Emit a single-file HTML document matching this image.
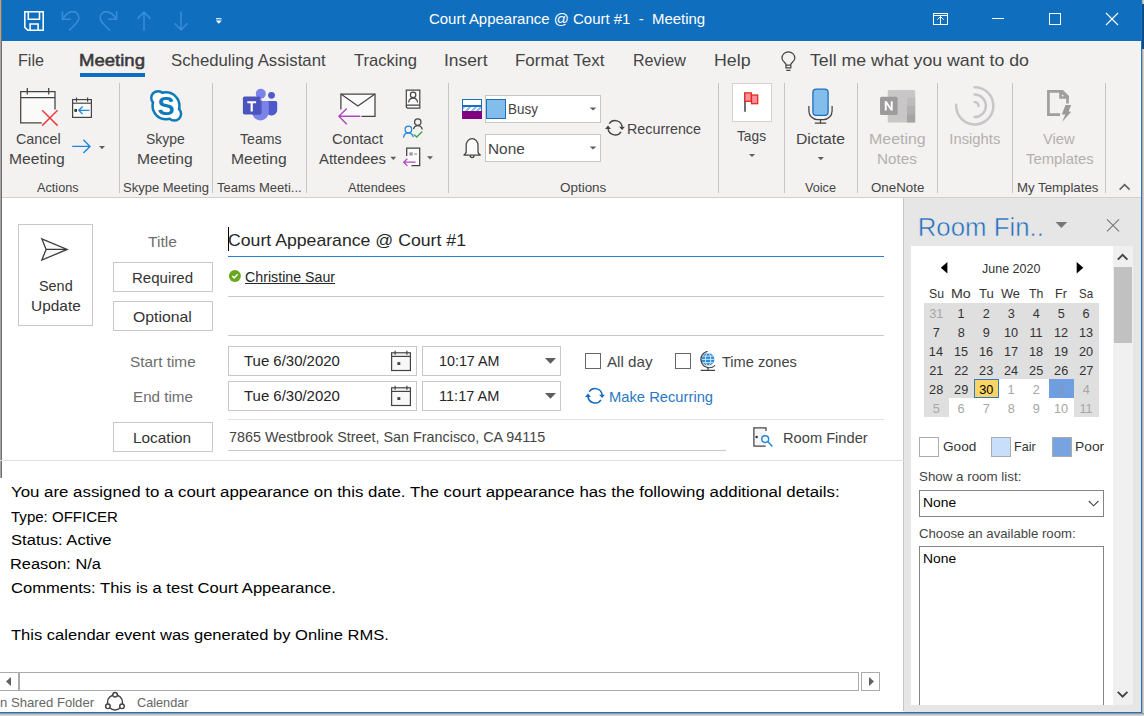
<!DOCTYPE html>
<html><head><meta charset="utf-8"><title>Court Appearance @ Court #1 - Meeting</title>
<style>
html,body{margin:0;padding:0;}
body{width:1144px;height:716px;overflow:hidden;position:relative;background:#fff;
font-family:"Liberation Sans", sans-serif;}
#w{position:absolute;left:0;top:0;width:1144px;height:716px;overflow:hidden;}
#w div,#w svg,#w span{position:absolute;}
.t{white-space:pre;transform-origin:0 50%;}
</style></head><body><div id="w">
<div style="left:0px;top:0px;width:1144px;height:41px;background:#106ebe;"></div>
<div style="left:0px;top:41px;width:1144px;height:156px;background:#f3f2f1;"></div>
<div style="left:0px;top:197px;width:1144px;height:1px;background:#d2d0ce;"></div>
<div style="left:904px;top:198px;width:238px;height:515px;background:#e6e6e6;"></div>
<div style="left:903px;top:198px;width:1px;height:513px;background:#c4c4c4;"></div>
<div style="left:0px;top:0px;width:1px;height:478px;background:#a6a6a6;"></div>
<div style="left:1px;top:0px;width:1px;height:478px;background:#6e6e6e;"></div>
<div style="left:1141px;top:0px;width:1px;height:713px;background:#1e74c4;"></div>
<div style="left:1142px;top:0px;width:1px;height:716px;background:#b4b0ac;"></div>
<div style="left:1143px;top:0px;width:1px;height:716px;background:#d2cfcc;"></div>
<div style="left:1142px;top:4px;width:2px;height:45px;background:#0f4c85;"></div>
<div style="left:1140px;top:41px;width:1px;height:156px;background:#fbf8f4;"></div>
<div style="left:0px;top:712px;width:1142px;height:1px;background:#1e74c4;"></div>
<div style="left:0px;top:713px;width:1144px;height:1px;background:#9a9a9a;"></div>
<div style="left:0px;top:714px;width:1144px;height:1px;background:#bdbdbd;"></div>
<div style="left:0px;top:715px;width:1144px;height:1px;background:#d8d8d8;"></div>
<span class="t" style="left:429.30px;top:10.87px;font-size:15.3px;line-height:15.3px;color:#fff;transform:scaleX(0.9775);">Court Appearance @ Court #1 &nbsp;- &nbsp;Meeting</span>
<svg style="left:23px;top:10px;" width="22" height="22" viewBox="0 0 22 22"><g fill="none" stroke="#fff" stroke-width="1.550">
<path d="M1.800 1.800H20.200V20.200H4.800L1.800 17.300z"/><path d="M5.300 1.800v7.400h11.200V1.800"/><path d="M7.100 20.200v-6.300h8v6.300"/></g></svg>
<svg style="left:61px;top:10px;" width="20" height="22" viewBox="0 0 20 22"><g fill="none" stroke="#3a8cd8" stroke-width="1.550">
<path d="M1.400 1.200v8.100h8.400"/><path d="M2 8.800C5 3.500 8.500 1.600 12 1.600A6 6.200 0 0 1 17.900 7.800C17.900 10.500 16 12.500 14.500 14L8 20.800"/></g></svg>
<svg style="left:98px;top:10px;" width="20" height="22" viewBox="0 0 20 22"><g fill="none" stroke="#3a8cd8" stroke-width="1.550" transform="translate(20,0) scale(-1,1)">
<path d="M1.400 1.200v8.100h8.400"/><path d="M2 8.800C5 3.500 8.500 1.600 12 1.600A6 6.200 0 0 1 17.900 7.800C17.900 10.500 16 12.500 14.500 14L8 20.800"/></g></svg>
<svg style="left:136px;top:10px;" width="16" height="22" viewBox="0 0 16 22"><g fill="none" stroke="#3a8cd8" stroke-width="1.550"><path d="M8 20.5V2.2M1.6 8.6L8 2.2l6.4 6.4"/></g></svg>
<svg style="left:173px;top:10px;" width="16" height="22" viewBox="0 0 16 22"><g fill="none" stroke="#3a8cd8" stroke-width="1.550"><path d="M8 1.5v18.3M1.6 13.4L8 19.8l6.4-6.4"/></g></svg>
<svg style="left:215px;top:17px;" width="8" height="8" viewBox="0 0 8 8"><path d="M1 1.2h5.6v1.1H1z" fill="#fff"/><path d="M0.8 3.6h6l-3 3.2z" fill="#fff"/></svg>
<svg style="left:932px;top:12px;" width="17" height="14" viewBox="0 0 17 14"><g fill="none" stroke="#fff" stroke-width="1"><rect x="1.500" y="1.500" width="14" height="11"/><path d="M1.500 3.500h14"/><path d="M8.500 12.500V4M5.400 7.700l3.100-3.200 3.100 3.200"/></g></svg>
<div style="left:992px;top:18px;width:12px;height:1px;background:#fff;"></div>
<div style="left:1049px;top:13px;width:12px;height:12px;border:1px solid #fff;box-sizing:border-box;"></div>
<svg style="left:1105px;top:12px;" width="14" height="14" viewBox="0 0 14 14"><path d="M1 1l12 12M13 1L1 13" stroke="#fff" stroke-width="1.1" fill="none"/></svg>
<span class="t" style="left:18.24px;top:52.02px;font-size:17px;line-height:17px;color:#444444;transform:scaleX(0.9497);">File</span>
<span class="t" style="left:79.05px;top:52.02px;font-size:17px;line-height:17px;color:#3b3a39;transform:scaleX(1.0911);-webkit-text-stroke:0.550px #3b3a39;">Meeting</span>
<div style="left:80px;top:73px;width:65px;height:4px;background:#106ebe;"></div>
<span class="t" style="left:170.78px;top:52.02px;font-size:17px;line-height:17px;color:#444444;transform:scaleX(0.9858);">Scheduling Assistant</span>
<span class="t" style="left:354.34px;top:52.02px;font-size:17px;line-height:17px;color:#444444;transform:scaleX(0.9758);">Tracking</span>
<span class="t" style="left:443.94px;top:52.02px;font-size:17px;line-height:17px;color:#444444;transform:scaleX(1.0231);">Insert</span>
<span class="t" style="left:514.97px;top:52.02px;font-size:17px;line-height:17px;color:#444444;">Format Text</span>
<span class="t" style="left:633.04px;top:52.02px;font-size:17px;line-height:17px;color:#444444;transform:scaleX(0.9466);">Review</span>
<span class="t" style="left:713.81px;top:52.02px;font-size:17px;line-height:17px;color:#444444;transform:scaleX(1.0441);">Help</span>
<span class="t" style="left:809.82px;top:52.02px;font-size:17px;line-height:17px;color:#444444;transform:scaleX(1.0435);">Tell me what you want to do</span>
<svg style="left:780px;top:50px;" width="17" height="22" viewBox="0 0 17 22"><g fill="none" stroke="#444" stroke-width="1.250">
<path d="M6 17.800V14.700C6 12.500 2 11.700 2 8.200A6.400 6.400 0 0 1 14.800 8.200C14.800 11.700 10.800 12.500 10.800 14.700V17.800z"/>
<path d="M6 15h4.800M6.300 20.400h4.200"/></g></svg>
<div style="left:119px;top:83px;width:1px;height:110px;background:#c8c6c4;"></div>
<div style="left:212px;top:83px;width:1px;height:110px;background:#c8c6c4;"></div>
<div style="left:306px;top:83px;width:1px;height:110px;background:#c8c6c4;"></div>
<div style="left:448px;top:83px;width:1px;height:110px;background:#c8c6c4;"></div>
<div style="left:718px;top:83px;width:1px;height:110px;background:#c8c6c4;"></div>
<div style="left:784px;top:83px;width:1px;height:110px;background:#c8c6c4;"></div>
<div style="left:857px;top:83px;width:1px;height:110px;background:#c8c6c4;"></div>
<div style="left:937px;top:83px;width:1px;height:110px;background:#c8c6c4;"></div>
<div style="left:1012px;top:83px;width:1px;height:110px;background:#c8c6c4;"></div>
<div style="left:1105px;top:83px;width:1px;height:110px;background:#c8c6c4;"></div>
<span class="t" style="left:15.63px;top:131.62px;font-size:14.8px;line-height:14.8px;color:#444444;transform:scaleX(0.9685);">Cancel</span>
<span class="t" style="left:9.37px;top:151.62px;font-size:14.8px;line-height:14.8px;color:#444444;transform:scaleX(1.0599);">Meeting</span>
<span class="t" style="left:37.40px;top:180.82px;font-size:13.4px;line-height:13.4px;color:#444444;transform:scaleX(0.9466);">Actions</span>
<span class="t" style="left:146.16px;top:131.62px;font-size:14.8px;line-height:14.8px;color:#444444;transform:scaleX(0.9433);">Skype</span>
<span class="t" style="left:137.38px;top:151.62px;font-size:14.8px;line-height:14.8px;color:#444444;transform:scaleX(1.0579);">Meeting</span>
<span class="t" style="left:122.99px;top:180.82px;font-size:13.4px;line-height:13.4px;color:#444444;transform:scaleX(0.9707);">Skype Meeting</span>
<span class="t" style="left:239.68px;top:131.62px;font-size:14.8px;line-height:14.8px;color:#444444;transform:scaleX(0.9534);">Teams</span>
<span class="t" style="left:231.38px;top:151.62px;font-size:14.8px;line-height:14.8px;color:#444444;transform:scaleX(1.0559);">Meeting</span>
<span class="t" style="left:216.90px;top:180.82px;font-size:13.4px;line-height:13.4px;color:#444444;transform:scaleX(0.9719);">Teams Meeti...</span>
<span class="t" style="left:331.70px;top:131.62px;font-size:14.8px;line-height:14.8px;color:#444444;transform:scaleX(1.0027);">Contact</span>
<span class="t" style="left:319.40px;top:151.62px;font-size:14.8px;line-height:14.8px;color:#444444;transform:scaleX(1.0032);">Attendees</span>
<span class="t" style="left:348.20px;top:180.82px;font-size:13.4px;line-height:13.4px;color:#444444;transform:scaleX(0.9528);">Attendees</span>
<div style="left:462px;top:99px;width:20px;height:20px;background:#fff;border:1px solid #1a6fbf;box-sizing:border-box;"></div>
<div style="left:462px;top:105px;width:20px;height:2px;background:#1a6fbf;"></div>
<div style="left:463px;top:107px;width:18px;height:4px;background:#a8d0f0;background:repeating-linear-gradient(135deg,#8fc3ee 0 2px,#fff 2px 4px);"></div>
<div style="left:462px;top:111px;width:20px;height:8px;background:#800080;"></div>
<div style="left:485px;top:95px;width:116px;height:27.5px;background:#fff;border:1px solid #c6c6c6;box-sizing:border-box;"></div>
<div style="left:486px;top:99px;width:20px;height:20px;background:#83bdeb;border:1.3px solid #1a6fbf;box-sizing:border-box;"></div>
<span class="t" style="left:507.95px;top:101.62px;font-size:14.8px;line-height:14.8px;color:#444444;transform:scaleX(0.9072);">Busy</span>
<div style="left:485px;top:134px;width:116px;height:27.5px;background:#fff;border:1px solid #c6c6c6;box-sizing:border-box;"></div>
<span class="t" style="left:487.50px;top:141.62px;font-size:14.8px;line-height:14.8px;color:#444444;transform:scaleX(1.0379);">None</span>
<span class="t" style="left:627.18px;top:121.62px;font-size:14.8px;line-height:14.8px;color:#444444;transform:scaleX(0.9673);">Recurrence</span>
<span class="t" style="left:559.67px;top:180.82px;font-size:13.4px;line-height:13.4px;color:#444444;transform:scaleX(1.0037);">Options</span>
<div style="left:732px;top:83px;width:40px;height:39px;background:#fff;border:1px solid #d4d2d0;box-sizing:border-box;"></div>
<span class="t" style="left:737.29px;top:128.62px;font-size:14.8px;line-height:14.8px;color:#444444;transform:scaleX(0.9291);">Tags</span>
<span class="t" style="left:796.47px;top:131.62px;font-size:14.8px;line-height:14.8px;color:#444444;transform:scaleX(1.0631);">Dictate</span>
<span class="t" style="left:805.00px;top:180.82px;font-size:13.4px;line-height:13.4px;color:#444444;transform:scaleX(0.9461);">Voice</span>
<span class="t" style="left:868.95px;top:131.62px;font-size:14.8px;line-height:14.8px;color:#b3b0ad;transform:scaleX(1.0777);">Meeting</span>
<span class="t" style="left:877.41px;top:151.62px;font-size:14.8px;line-height:14.8px;color:#b3b0ad;transform:scaleX(1.0312);">Notes</span>
<span class="t" style="left:870.98px;top:180.82px;font-size:13.4px;line-height:13.4px;color:#444444;transform:scaleX(0.9950);">OneNote</span>
<span class="t" style="left:949.35px;top:131.62px;font-size:14.8px;line-height:14.8px;color:#b3b0ad;">Insights</span>
<span class="t" style="left:1043.00px;top:131.62px;font-size:14.8px;line-height:14.8px;color:#b3b0ad;transform:scaleX(0.9940);">View</span>
<span class="t" style="left:1025.67px;top:151.62px;font-size:14.8px;line-height:14.8px;color:#b3b0ad;transform:scaleX(1.0051);">Templates</span>
<span class="t" style="left:1017.37px;top:180.82px;font-size:13.4px;line-height:13.4px;color:#444444;transform:scaleX(0.9878);">My Templates</span>
<div style="left:18px;top:224px;width:75px;height:102px;background:#fff;border:1px solid #c8c8c8;box-sizing:border-box;"></div>
<span class="t" style="left:38.75px;top:278.62px;font-size:14.8px;line-height:14.8px;color:#333;transform:scaleX(0.9738);">Send</span>
<span class="t" style="left:30.53px;top:298.62px;font-size:14.8px;line-height:14.8px;color:#333;transform:scaleX(1.0433);">Update</span>
<span class="t" style="left:148.46px;top:234.62px;font-size:14.8px;line-height:14.8px;color:#6e6e6e;transform:scaleX(1.0572);">Title</span>
<span class="t" style="left:228.37px;top:232.02px;font-size:17px;line-height:17px;color:#262626;transform:scaleX(1.0394);">Court Appearance @ Court #1</span>
<div style="left:228px;top:226.5px;width:1px;height:24.5px;background:#000;"></div>
<div style="left:228px;top:256px;width:656px;height:1px;background:#2b7fd0;"></div>
<div style="left:113px;top:262px;width:100px;height:30px;background:#fff;border:1px solid #c8c8c8;box-sizing:border-box;"></div>
<span class="t" style="left:132.22px;top:270.62px;font-size:14.8px;line-height:14.8px;color:#333;transform:scaleX(1.0177);">Required</span>
<span class="t" style="left:244.83px;top:269.72px;font-size:14.6px;line-height:14.6px;color:#262626;transform:scaleX(0.9744);">Christine Saur</span>
<div style="left:245px;top:283px;width:90px;height:1px;background:#262626;"></div>
<div style="left:228px;top:296px;width:656px;height:1px;background:#c8c8c8;"></div>
<div style="left:113px;top:301px;width:100px;height:30px;background:#fff;border:1px solid #c8c8c8;box-sizing:border-box;"></div>
<span class="t" style="left:133.46px;top:309.62px;font-size:14.8px;line-height:14.8px;color:#333;transform:scaleX(1.0663);">Optional</span>
<div style="left:228px;top:335px;width:656px;height:1px;background:#c8c8c8;"></div>
<span class="t" style="left:129.82px;top:354.62px;font-size:14.8px;line-height:14.8px;color:#6e6e6e;transform:scaleX(1.0375);">Start time</span>
<span class="t" style="left:132.51px;top:389.62px;font-size:14.8px;line-height:14.8px;color:#6e6e6e;transform:scaleX(1.0274);">End time</span>
<div style="left:228px;top:346px;width:189px;height:30px;background:#fff;border:1px solid #c8c8c8;box-sizing:border-box;"></div>
<div style="left:422px;top:346px;width:139px;height:30px;background:#fff;border:1px solid #c8c8c8;box-sizing:border-box;"></div>
<span class="t" style="left:244.47px;top:353.62px;font-size:14.8px;line-height:14.8px;color:#262626;transform:scaleX(1.0105);">Tue 6/30/2020</span>
<span class="t" style="left:438.91px;top:353.62px;font-size:14.8px;line-height:14.8px;color:#262626;transform:scaleX(0.9670);">10:17 AM</span>
<div style="left:228px;top:381px;width:189px;height:30px;background:#fff;border:1px solid #c8c8c8;box-sizing:border-box;"></div>
<div style="left:422px;top:381px;width:139px;height:30px;background:#fff;border:1px solid #c8c8c8;box-sizing:border-box;"></div>
<span class="t" style="left:244.47px;top:388.62px;font-size:14.8px;line-height:14.8px;color:#262626;transform:scaleX(1.0105);">Tue 6/30/2020</span>
<span class="t" style="left:438.89px;top:388.62px;font-size:14.8px;line-height:14.8px;color:#262626;transform:scaleX(0.9846);">11:17 AM</span>
<div style="left:585px;top:353px;width:16px;height:16px;background:#fff;border:1px solid #666;box-sizing:border-box;"></div>
<span class="t" style="left:607.30px;top:354.62px;font-size:14.8px;line-height:14.8px;color:#444;transform:scaleX(1.0243);">All day</span>
<div style="left:675px;top:353px;width:16px;height:16px;background:#fff;border:1px solid #666;box-sizing:border-box;"></div>
<span class="t" style="left:722.37px;top:354.62px;font-size:14.8px;line-height:14.8px;color:#444;transform:scaleX(0.9860);">Time zones</span>
<span class="t" style="left:609.35px;top:389.62px;font-size:14.8px;line-height:14.8px;color:#2b79c2;transform:scaleX(0.9964);">Make Recurring</span>
<div style="left:228px;top:419px;width:656px;height:1px;background:#e3e3e3;"></div>
<div style="left:113px;top:422px;width:100px;height:30px;background:#fff;border:1px solid #c8c8c8;box-sizing:border-box;"></div>
<span class="t" style="left:133.30px;top:430.62px;font-size:14.8px;line-height:14.8px;color:#333;transform:scaleX(1.0395);">Location</span>
<span class="t" style="left:228.93px;top:429.62px;font-size:14.8px;line-height:14.8px;color:#444;transform:scaleX(0.9700);">7865 Westbrook Street, San Francisco, CA 94115</span>
<div style="left:228px;top:450px;width:498px;height:1px;background:#c8c8c8;"></div>
<span class="t" style="left:782.95px;top:430.62px;font-size:14.8px;line-height:14.8px;color:#444;transform:scaleX(0.9904);">Room Finder</span>
<div style="left:0px;top:460px;width:904px;height:1px;background:#e1dfdd;"></div>
<span class="t" style="left:11.44px;top:484.32px;font-size:15.2px;line-height:15.2px;color:#000;transform:scaleX(1.1090);">You are assigned to a court appearance on this date. The court appearance has the following additional details:</span>
<span class="t" style="left:11.46px;top:508.52px;font-size:15.2px;line-height:15.2px;color:#000;transform:scaleX(0.9903);">Type: OFFICER</span>
<span class="t" style="left:11.18px;top:531.92px;font-size:15.2px;line-height:15.2px;color:#000;transform:scaleX(1.0921);">Status: Active</span>
<span class="t" style="left:10.42px;top:555.52px;font-size:15.2px;line-height:15.2px;color:#000;transform:scaleX(1.0767);">Reason: N/a</span>
<span class="t" style="left:10.92px;top:579.52px;font-size:15.2px;line-height:15.2px;color:#000;transform:scaleX(1.0910);">Comments: This is a test Court Appearance.</span>
<span class="t" style="left:11.44px;top:626.72px;font-size:15.2px;line-height:15.2px;color:#000;transform:scaleX(1.0890);">This calendar event was generated by Online RMS.</span>
<div style="left:-1px;top:672px;width:860px;height:19px;background:#fff;border:1px solid #ababab;box-sizing:border-box;"></div>
<div style="left:18px;top:672px;width:2px;height:19px;background:#ababab;"></div>
<div style="left:861px;top:672px;width:19px;height:19px;background:#fff;border:1px solid #ababab;box-sizing:border-box;"></div>
<span class="t" style="left:-0.32px;top:695.87px;font-size:13.3px;line-height:13.3px;color:#666666;transform:scaleX(0.9865);">n Shared Folder</span>
<span class="t" style="left:137.20px;top:695.87px;font-size:13.3px;line-height:13.3px;color:#666666;transform:scaleX(0.9553);">Calendar</span>
<span class="t" style="left:917.69px;top:215.12px;font-size:25.8px;line-height:25.8px;color:#1e6ec0;-webkit-text-stroke:0.500px #e6e6e6;">Room Fin..</span>
<div style="left:911px;top:246px;width:202px;height:459px;background:#fff;"></div>
<div style="left:1113px;top:246px;width:20px;height:459px;background:#f0f0f0;"></div>
<div style="left:1113.5px;top:267px;width:18.5px;height:75.5px;background:#c1c1c1;"></div>
<span class="t" style="left:982.05px;top:262.67px;font-size:12.7px;line-height:12.7px;color:#333;transform:scaleX(0.9845);">June 2020</span>
<div style="left:924px;top:303px;width:175px;height:114px;background:#dfdfdf;"></div>
<div style="left:999px;top:379px;width:50px;height:19px;background:#fff;"></div>
<div style="left:949px;top:398px;width:125px;height:19px;background:#fff;"></div>
<div style="left:1049px;top:379px;width:25px;height:19px;background:#6f9fe0;"></div>
<div style="left:974px;top:379px;width:25px;height:19px;background:#fcd464;border:1px solid #2b79c2;box-sizing:border-box;"></div>
<span class="t" style="left:928.67px;top:287.67px;font-size:12.7px;line-height:12.7px;color:#333;transform:scaleX(0.9668);">Su</span>
<span class="t" style="left:950.80px;top:287.67px;font-size:12.7px;line-height:12.7px;color:#333;transform:scaleX(1.1200);">Mo</span>
<span class="t" style="left:978.94px;top:287.67px;font-size:12.7px;line-height:12.7px;color:#333;transform:scaleX(1.0311);">Tu</span>
<span class="t" style="left:1000.95px;top:287.67px;font-size:12.7px;line-height:12.7px;color:#333;transform:scaleX(1.0106);">We</span>
<span class="t" style="left:1028.96px;top:287.67px;font-size:12.7px;line-height:12.7px;color:#333;transform:scaleX(0.9667);">Th</span>
<span class="t" style="left:1054.51px;top:287.67px;font-size:12.7px;line-height:12.7px;color:#333;transform:scaleX(0.9900);">Fr</span>
<span class="t" style="left:1078.70px;top:287.67px;font-size:12.7px;line-height:12.7px;color:#333;transform:scaleX(0.9054);">Sa</span>
<span class="t" style="left:929.22px;top:307.67px;font-size:12.7px;line-height:12.7px;color:#a6a6a6;">31</span>
<span class="t" style="left:957.50px;top:307.67px;font-size:12.7px;line-height:12.7px;color:#333;">1</span>
<span class="t" style="left:982.68px;top:307.67px;font-size:12.7px;line-height:12.7px;color:#333;">2</span>
<span class="t" style="left:1007.70px;top:307.67px;font-size:12.7px;line-height:12.7px;color:#333;">3</span>
<span class="t" style="left:1032.73px;top:307.67px;font-size:12.7px;line-height:12.7px;color:#333;">4</span>
<span class="t" style="left:1057.67px;top:307.67px;font-size:12.7px;line-height:12.7px;color:#333;">5</span>
<span class="t" style="left:1082.62px;top:307.67px;font-size:12.7px;line-height:12.7px;color:#333;">6</span>
<span class="t" style="left:932.65px;top:326.67px;font-size:12.7px;line-height:12.7px;color:#333;">7</span>
<span class="t" style="left:957.65px;top:326.67px;font-size:12.7px;line-height:12.7px;color:#333;">8</span>
<span class="t" style="left:982.68px;top:326.67px;font-size:12.7px;line-height:12.7px;color:#333;">9</span>
<span class="t" style="left:1003.89px;top:326.67px;font-size:12.7px;line-height:12.7px;color:#333;">10</span>
<span class="t" style="left:1029.44px;top:326.67px;font-size:12.7px;line-height:12.7px;color:#333;">11</span>
<span class="t" style="left:1053.97px;top:326.67px;font-size:12.7px;line-height:12.7px;color:#333;">12</span>
<span class="t" style="left:1078.92px;top:326.67px;font-size:12.7px;line-height:12.7px;color:#333;">13</span>
<span class="t" style="left:928.84px;top:345.67px;font-size:12.7px;line-height:12.7px;color:#333;">14</span>
<span class="t" style="left:953.92px;top:345.67px;font-size:12.7px;line-height:12.7px;color:#333;">15</span>
<span class="t" style="left:978.92px;top:345.67px;font-size:12.7px;line-height:12.7px;color:#333;">16</span>
<span class="t" style="left:1003.97px;top:345.67px;font-size:12.7px;line-height:12.7px;color:#333;">17</span>
<span class="t" style="left:1028.92px;top:345.67px;font-size:12.7px;line-height:12.7px;color:#333;">18</span>
<span class="t" style="left:1053.94px;top:345.67px;font-size:12.7px;line-height:12.7px;color:#333;">19</span>
<span class="t" style="left:1079.07px;top:345.67px;font-size:12.7px;line-height:12.7px;color:#333;">20</span>
<span class="t" style="left:929.14px;top:364.67px;font-size:12.7px;line-height:12.7px;color:#333;">21</span>
<span class="t" style="left:954.14px;top:364.67px;font-size:12.7px;line-height:12.7px;color:#333;">22</span>
<span class="t" style="left:979.09px;top:364.67px;font-size:12.7px;line-height:12.7px;color:#333;">23</span>
<span class="t" style="left:1004.02px;top:364.67px;font-size:12.7px;line-height:12.7px;color:#333;">24</span>
<span class="t" style="left:1029.09px;top:364.67px;font-size:12.7px;line-height:12.7px;color:#333;">25</span>
<span class="t" style="left:1054.09px;top:364.67px;font-size:12.7px;line-height:12.7px;color:#333;">26</span>
<span class="t" style="left:1079.14px;top:364.67px;font-size:12.7px;line-height:12.7px;color:#333;">27</span>
<span class="t" style="left:929.09px;top:383.67px;font-size:12.7px;line-height:12.7px;color:#333;">28</span>
<span class="t" style="left:954.12px;top:383.67px;font-size:12.7px;line-height:12.7px;color:#333;">29</span>
<span class="t" style="left:979.14px;top:383.67px;font-size:12.7px;line-height:12.7px;color:#000;">30</span>
<span class="t" style="left:1007.50px;top:383.67px;font-size:12.7px;line-height:12.7px;color:#a6a6a6;">1</span>
<span class="t" style="left:1032.67px;top:383.67px;font-size:12.7px;line-height:12.7px;color:#a6a6a6;">2</span>
<span class="t" style="left:1057.70px;top:383.67px;font-size:12.7px;line-height:12.7px;color:#8098bd;">3</span>
<span class="t" style="left:1082.73px;top:383.67px;font-size:12.7px;line-height:12.7px;color:#a6a6a6;">4</span>
<span class="t" style="left:932.68px;top:402.67px;font-size:12.7px;line-height:12.7px;color:#a6a6a6;">5</span>
<span class="t" style="left:957.62px;top:402.67px;font-size:12.7px;line-height:12.7px;color:#a6a6a6;">6</span>
<span class="t" style="left:982.65px;top:402.67px;font-size:12.7px;line-height:12.7px;color:#a6a6a6;">7</span>
<span class="t" style="left:1007.65px;top:402.67px;font-size:12.7px;line-height:12.7px;color:#a6a6a6;">8</span>
<span class="t" style="left:1032.67px;top:402.67px;font-size:12.7px;line-height:12.7px;color:#a6a6a6;">9</span>
<span class="t" style="left:1053.89px;top:402.67px;font-size:12.7px;line-height:12.7px;color:#a6a6a6;">10</span>
<span class="t" style="left:1079.44px;top:402.67px;font-size:12.7px;line-height:12.7px;color:#a6a6a6;">11</span>
<div style="left:919px;top:437px;width:20px;height:20px;background:#fff;border:1px solid #ababab;box-sizing:border-box;"></div>
<span class="t" style="left:943.26px;top:440.67px;font-size:12.7px;line-height:12.7px;color:#333;transform:scaleX(1.0723);">Good</span>
<div style="left:991px;top:437px;width:20px;height:20px;background:#c7dffb;border:1px solid #ababab;box-sizing:border-box;"></div>
<span class="t" style="left:1014.21px;top:440.67px;font-size:12.7px;line-height:12.7px;color:#333;transform:scaleX(0.9907);">Fair</span>
<div style="left:1052px;top:437px;width:20px;height:20px;background:#77a4e1;border:1px solid #ababab;box-sizing:border-box;"></div>
<span class="t" style="left:1074.91px;top:440.67px;font-size:12.7px;line-height:12.7px;color:#333;transform:scaleX(1.0878);">Poor</span>
<span class="t" style="left:918.72px;top:470.67px;font-size:12.7px;line-height:12.7px;color:#444;transform:scaleX(1.0520);">Show a room list:</span>
<div style="left:919px;top:490px;width:185px;height:27px;background:#fff;border:1px solid #848488;box-sizing:border-box;"></div>
<span class="t" style="left:923.31px;top:496.67px;font-size:12.7px;line-height:12.7px;color:#000;transform:scaleX(1.0904);">None</span>
<span class="t" style="left:918.98px;top:527.67px;font-size:12.7px;line-height:12.7px;color:#444;transform:scaleX(1.0378);">Choose an available room:</span>
<div style="left:919px;top:546px;width:185px;height:170px;background:#fff;border:1px solid #848488;box-sizing:border-box;clip-path:inset(0 0 11px 0);"></div>
<span class="t" style="left:923.31px;top:552.67px;font-size:12.7px;line-height:12.7px;color:#000;transform:scaleX(1.0904);">None</span>
<svg style="left:0px;top:0px;pointer-events:none;" width="1144" height="716" viewBox="0 0 1144 716"><g fill="none" stroke="#444" stroke-width="1.25">
<rect x="20.700" y="91.600" width="34.300" height="31.300" fill="#fafafa" stroke="none"/><path d="M55 109.500V91.600H20.700V122.900H41.800"/><path d="M20.700 97.700H55"/>
<path d="M27.300 88v6.600M48.700 88v6.600"/></g>
<path d="M42.200 110.200L57.600 125.600M57.600 110.200L42.200 125.600" stroke="#ee3d43" stroke-width="1.5" fill="none"/><g fill="none" stroke="#444" stroke-width="1.2">
<rect x="72.600" y="99.600" width="18.800" height="17.800" fill="#fafafa"/><path d="M72.600 103.200H91.400"/>
<path d="M76.500 97.600v4.200M87.600 97.600v4.200"/></g>
<rect x="74.400" y="109" width="2.600" height="2.800" fill="#333"/>
<path d="M89.400 110.300H79M82.600 106.500L78.800 110.300l3.800 3.800" stroke="#1e86dd" stroke-width="1.3" fill="none"/><path d="M72.200 146.400H90M83.400 139.800L90 146.400l-6.600 6.600" stroke="#1e86dd" stroke-width="1.4" fill="none"/><path d="M99 146H105L102.0 149.3z" fill="#605e5c"/><g fill="#0f7ab8"><circle cx="166" cy="105.800" r="14.700"/><circle cx="158" cy="97.900" r="8"/><circle cx="174.300" cy="113.800" r="8"/></g>
<g fill="#fff"><circle cx="166" cy="105.800" r="12.200"/><circle cx="158" cy="97.900" r="5.500"/><circle cx="174.300" cy="113.800" r="5.500"/></g>
<text x="166.100" y="114.700" text-anchor="middle" font-family="Liberation Sans, sans-serif" font-weight="700" font-size="25.500" fill="#0f7ab8">S</text><circle cx="271.500" cy="95.300" r="3.400" fill="#5059c9"/>
<path d="M266 101h9.600a1.600 1.600 0 0 1 1.600 1.600v7.400a5.400 5.400 0 0 1-5.400 5.400h-0.600a5.400 5.400 0 0 1-5.200-5.400z" fill="#5059c9"/>
<circle cx="260.800" cy="93.800" r="5" fill="#7b83eb"/>
<path d="M252 101h15.200a1.600 1.600 0 0 1 1.600 1.600v9.400a8.400 8.400 0 0 1-16.800 0z" fill="#7b83eb"/>
<path d="M253 99.500h8.800v13.600a1.600 1.600 0 0 1-1.600 1.600h-7.200z" fill="#3d44a8" opacity=".55"/>
<rect x="242.900" y="96.600" width="17.600" height="17.800" rx="1.600" fill="#4b53bc"/>
<path d="M247.300 101.200h8.800v2h-3.300v8.400h-2.200v-8.400h-3.300z" fill="#fff"/><g fill="none" stroke="#444" stroke-width="1.25">
<rect x="340.900" y="94.100" width="34.100" height="22.300" fill="#fafafa" stroke="none"/><path d="M340.900 109.600V94.100H375v22.300H361.500"/><path d="M340.900 94.100L357.900 105.900 375 94.100"/></g>
<path d="M360.300 116.300H339M346.800 108.400L338.900 116.300l7.900 7.900" stroke="#b146c2" stroke-width="1.4" fill="none"/><path d="M390.4 156.8H396.2L393.29999999999995 159.9z" fill="#605e5c"/><g fill="none" stroke="#444" stroke-width="1.200">
<path d="M406.300 90.100h13.500v18h-12.200a1.500 1.500 0 0 1-1.300-1.500z" fill="#fafafa"/><path d="M406.300 106.400c0-0.800 0.600-1.300 1.400-1.300h12"/>
<circle cx="413.100" cy="94.900" r="2.700"/><path d="M408.600 102.400c0.300-2.600 2.200-4.300 4.500-4.300s4.200 1.700 4.500 4.300"/></g><g fill="none" stroke-width="1.250">
<circle cx="417.800" cy="122.100" r="3.200" stroke="#444"/><path d="M413.500 129.200c0.600-2.400 2.200-3.700 4.300-3.700 2.200 0 4 1.500 4.500 4" stroke="#444"/>
<circle cx="408.400" cy="129.500" r="3.300" stroke="#1e86dd"/><path d="M403.500 137.800c0.300-3 2.300-4.900 4.900-4.900 2.400 0 4.300 1.700 4.900 4.300" stroke="#1e86dd"/>
<path d="M414 134.600l2.700 2.500 5.600-5.500" stroke="#3ba845" stroke-width="1.400"/></g><g fill="none" stroke="#444" stroke-width="1.250">
<rect x="406.700" y="148" width="13" height="17.600" fill="#fafafa" stroke="none"/><path d="M406.700 156V148h13v17.600h-8.200"/></g>
<rect x="409.400" y="152.400" width="3.300" height="3.100" fill="#9a9a9a"/><rect x="414.200" y="153.400" width="2.800" height="1.200" fill="#9a9a9a"/>
<path d="M415.600 162.200H404M407.400 158.600L403.700 162.200l3.700 3.700" stroke="#b146c2" stroke-width="1.300" fill="none"/><path d="M427 156.2H433L430.0 159.4z" fill="#605e5c"/><path d="M589.7 107.6H596.3L593.0 110.6z" fill="#605e5c"/><path d="M589.7 146.6H596.3L593.0 149.6z" fill="#605e5c"/><g fill="none" stroke="#444" stroke-width="1.250"><path d="M463.600 155.200c1.600-0.600 2.600-1.400 2.600-3.600v-6.200c0-3.800 2.600-6.700 5.900-6.700s5.900 2.900 5.900 6.700v6.200c0 2.200 1 3 2.600 3.600z" fill="#fafafa"/>
<path d="M470.100 155.600c0 1.200 0.800 2 2 2s2-0.800 2-2"/></g><g fill="none" stroke="#444" stroke-width="1.35"><path d="M609.20 123.60A7.100 7.100 0 0 1 622.10 127.30"/>
<path d="M621.00 131.80A7.100 7.100 0 0 1 608.00 128.10"/></g>
<path d="M619.06 126.70L624.86 126.70L622.10 130.00z" fill="#444"/><path d="M605.06 129.00L610.96 129.00L608.00 125.60z" fill="#444"/><path d="M745 92.500V111.800" stroke="#555" stroke-width="1.700"/>
<rect x="744.800" y="92.900" width="6.500" height="8.400" fill="#ff8f98" stroke="#dc2a1e" stroke-width="1.250"/>
<rect x="751.500" y="95" width="6.200" height="8.700" fill="#ff8f98" stroke="#dc2a1e" stroke-width="1.250"/><path d="M748.9 154H755.1L752.0 157.1z" fill="#605e5c"/><rect x="812.900" y="89.200" width="15.200" height="26.200" rx="3.400" fill="#83bdeb" stroke="#1a6fbf" stroke-width="1.300"/>
<g fill="none" stroke="#444" stroke-width="1.250"><path d="M808.900 106v5a8.500 8.500 0 0 0 8.500 8.500h6.200a8.500 8.500 0 0 0 8.500-8.500v-5"/>
<path d="M820.500 119.500V123M814.800 123.200h11.400"/></g><path d="M817.7 157.1H823.9L820.8 160.2z" fill="#605e5c"/><rect x="887.700" y="90" width="27.500" height="32.500" rx="1.500" fill="#c8c6c6"/>
<rect x="907" y="97.500" width="8.200" height="8.400" fill="#bdbbbb"/><rect x="907" y="105.900" width="8.200" height="8.300" fill="#b1afaf"/><rect x="907" y="114.200" width="8.200" height="8.300" fill="#a5a3a3"/>
<rect x="880" y="96.800" width="17.600" height="18.200" rx="1.500" fill="#9d9b9b"/>
<path d="M884.800 110.600v-9.400h2l4 6.200v-6.200h1.900v9.400h-2l-4-6.200v6.200z" fill="#fff"/><g fill="none" stroke="#c8c6c8" stroke-width="2.500" stroke-linecap="round">
<path d="M974.600 87.200a18.600 18.600 0 1 1-18.400 17.600"/><path d="M974.600 94.500a11.300 11.300 0 0 1 0 22.600"/><path d="M974.600 102a3.900 3.900 0 0 1 3.900 3.900"/></g><path d="M1060 114.600H1048.400V91.300H1062.100L1067.500 96.600V103.400" fill="none" stroke="#a09e9e" stroke-width="2.700"/>
<path d="M1059.200 90V98.700H1068.800V96L1062.700 90z" fill="#a09e9e"/><circle cx="1062.600" cy="95.600" r="0.900" fill="#f3f2f1"/>
<path d="M1065.500 105.100H1071.200L1068.600 111.400 1071.200 111.800 1062.100 122 1065.300 114.600 1061.800 114.400z" fill="#9a9a9a"/><path d="M1119.600 189.600l5-5 5 5" fill="none" stroke="#605e5c" stroke-width="1.500"/><path d="M41.800 238.800L67.200 249.400 41.800 260.100 46.100 249.400zM46.100 249.400H67" fill="#fafafa" stroke="#3c3c3c" stroke-width="1.300" stroke-linejoin="miter"/><circle cx="234.900" cy="275.900" r="6" fill="#69a81e"/><path d="M232.200 276l2 1.900 3.400-3.600" fill="none" stroke="#fff" stroke-width="1.500"/><g transform="translate(0,0)"><g fill="none" stroke="#444" stroke-width="1.200">
<rect x="391.600" y="352.800" width="18.800" height="17.700" fill="#f8f8f8"/><path d="M391.600 356.400H410.400"/>
<path d="M395.100 350.700v4M406.900 350.700v4"/></g><rect x="397.400" y="362.100" width="2.900" height="2.900" fill="#444"/>
<path d="M544.900 357.900H556L550.450 363.700z" fill="#605e5c"/></g><g transform="translate(0,35)"><g fill="none" stroke="#444" stroke-width="1.200">
<rect x="391.600" y="352.800" width="18.800" height="17.700" fill="#f8f8f8"/><path d="M391.600 356.400H410.400"/>
<path d="M395.100 350.700v4M406.900 350.700v4"/></g><rect x="397.400" y="362.100" width="2.900" height="2.900" fill="#444"/>
<path d="M544.900 357.900H556L550.450 363.700z" fill="#605e5c"/></g><circle cx="708.100" cy="359.400" r="6.300" fill="#2e8bd8"/>
<g fill="none" stroke="#dcecf9" stroke-width="0.900"><ellipse cx="708.100" cy="359.400" rx="2.700" ry="6.300"/><path d="M701.800 359.400h12.600M702.900 356.200h10.400M702.900 362.600h10.400"/></g>
<g fill="none" stroke="#444" stroke-width="1.200"><path d="M707.600 351.300A8.300 8.300 0 1 0 715 365.400"/><path d="M708 367.400v2.800M700.600 370.300h14.400"/></g><g fill="none" stroke="#1268be" stroke-width="1.5"><path d="M589.20 391.60A7.100 7.100 0 0 1 602.10 395.30"/>
<path d="M601.00 399.80A7.100 7.100 0 0 1 588.00 396.10"/></g>
<path d="M599.06 394.70L604.86 394.70L602.10 398.00z" fill="#1268be"/><path d="M585.06 397.00L590.96 397.00L588.00 393.60z" fill="#1268be"/><rect x="753.900" y="427.900" width="12.100" height="18.100" fill="#f6f6f6"/><g fill="none" stroke="#444" stroke-width="1.250"><path d="M766 431V427.900H753.900V446H765.600"/></g>
<circle cx="756.600" cy="437" r="1.250" fill="#333"/>
<circle cx="765.200" cy="439.100" r="3.400" fill="#fff" stroke="#1e86dd" stroke-width="1.400"/><path d="M767.700 441.600L772.400 446.400" stroke="#1e86dd" stroke-width="1.500"/><path d="M11 677V686L6 681.500z" fill="#606060"/><path d="M869 677V686L874 681.500z" fill="#606060"/><g fill="none" stroke="#444" stroke-width="1.450"><circle cx="115" cy="702.400" r="7.500"/>
<circle cx="115.100" cy="694.700" r="2.300" fill="#fff"/><circle cx="107.900" cy="706.300" r="2.300" fill="#fff"/><circle cx="122" cy="706.300" r="2.300" fill="#fff"/></g><path d="M1055.500 222H1067.200L1061.350 227.900z" fill="#777"/><path d="M1107 219.400L1119 231.400M1119 219.400L1107 231.400" stroke="#777" stroke-width="1.100" fill="none"/><path d="M1117.800 259.600l4.800-4.800 4.800 4.800" fill="none" stroke="#444" stroke-width="1.900"/><path d="M1117.800 691.800l4.800 4.800 4.800-4.800" fill="none" stroke="#444" stroke-width="1.900"/><path d="M947.400 262V273.400L940.800 267.700z" fill="#000"/><path d="M1076.700 262V273.400L1083.300 267.700z" fill="#000"/><path d="M1088.800 501l4.800 4.800 4.800-4.800" fill="none" stroke="#444" stroke-width="1.100"/></svg>
</div></body></html>
